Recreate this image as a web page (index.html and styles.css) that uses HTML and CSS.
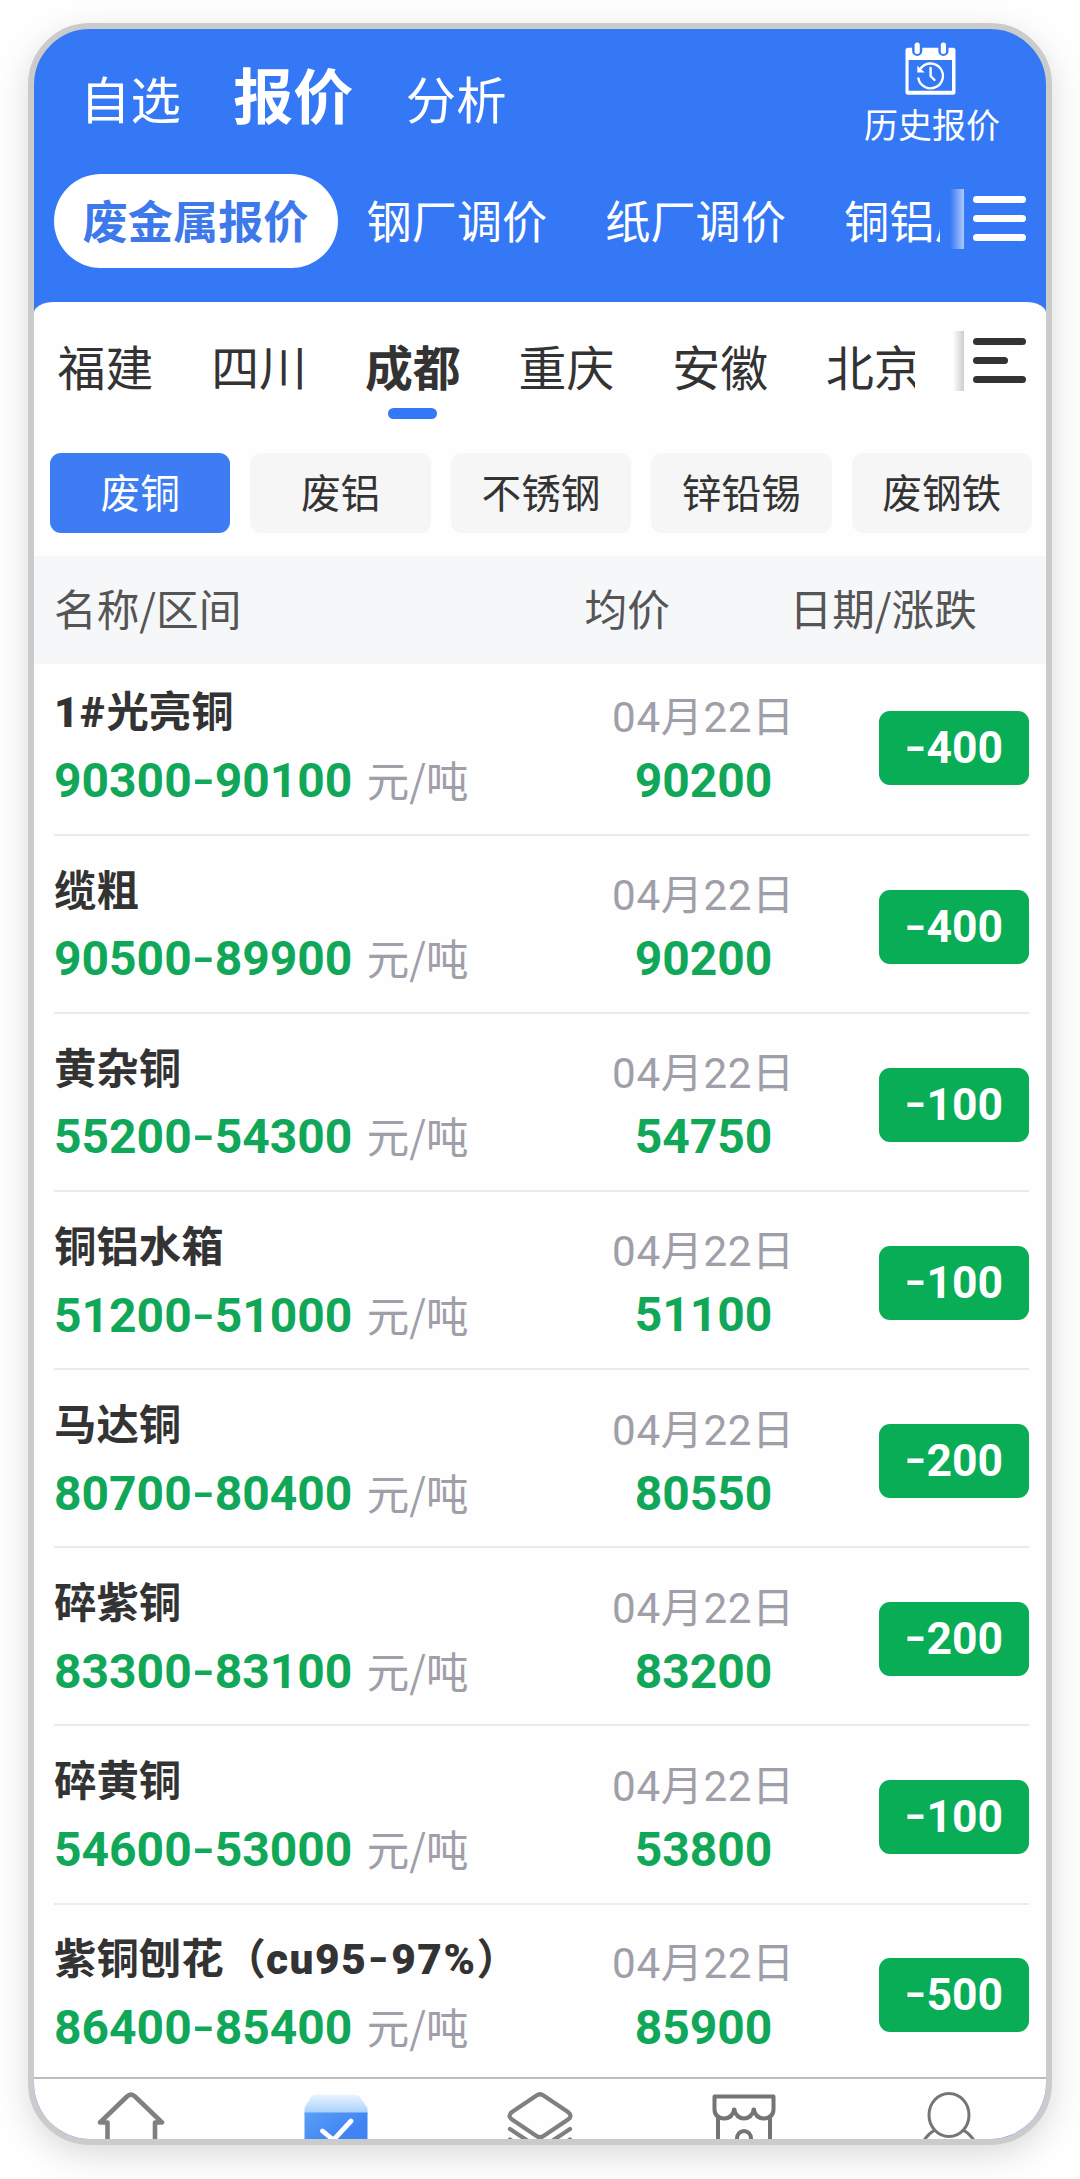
FILE: index.html
```html
<!DOCTYPE html>
<html lang="zh-CN">
<head>
<meta charset="utf-8">
<title>报价</title>
<link rel="stylesheet" href="styles.css">
</head>
<body>
<div class="phone">
  <header class="header">
    <div class="top">
      <nav class="nav"><span>自选</span><span class="nav-active">报价</span><span>分析</span></nav>
      <div class="history">
        <svg width="51" height="54" viewBox="0 0 51 54" fill="none">
          <path d="M3 5.7H48Q50.5 5.7 50.5 8.5V50Q50.5 52.8 48 52.8H3Q.5 52.8 .5 50V8.5Q.5 5.7 3 5.7Z" fill="#fff"/>
          <path d="M3.6 18H47V48.8H3.6Z" fill="#3478f5"/>
          <rect x="9.6" y="-2" width="5.2" height="13.5" rx="2.6" fill="#fff" stroke="#3478f5" stroke-width="5"/>
          <rect x="35.8" y="-2" width="5.2" height="13.5" rx="2.6" fill="#fff" stroke="#3478f5" stroke-width="5"/>
          <rect x="9.6" y=".5" width="5.2" height="11.5" rx="2.5" fill="#fff"/>
          <rect x="35.8" y=".5" width="5.2" height="11.5" rx="2.5" fill="#fff"/>
          <path d="M16 26A12.4 12.4 0 1 1 13.4 36.5M25.6 26V34L29.5 38" stroke="#fff" stroke-width="2.4" stroke-linecap="round"/>
          <path d="M12.3 23.8V30.6H19.8Z" fill="#fff"/>
        </svg>
        <span>历史报价</span>
      </div>
    </div>
    <div class="kinds">
      <div class="kind-list"><span class="kind kind-active">废金属报价</span><span class="kind">钢厂调价</span><span class="kind">纸厂调价</span><span class="kind">铜铝厂调价</span></div>
      <i class="fade"></i>
      <div class="menu"><i></i><i></i><i></i></div>
    </div>
  </header>
  <main class="sheet">
    <div class="regions">
      <div class="region-list"><span>福建</span><span>四川</span><span class="region-active">成都</span><span>重庆</span><span>安徽</span><span>北京</span></div>
      <i class="fade fade-dark"></i>
      <div class="menu menu-dark"><i></i><i class="short"></i><i></i></div>
    </div>
    <div class="chips"><span class="chip chip-active">废铜</span><span class="chip">废铝</span><span class="chip">不锈钢</span><span class="chip">锌铅锡</span><span class="chip">废钢铁</span></div>
    <div class="thead"><span>名称/区间</span><span>均价</span><span>日期/涨跌</span></div>
    <div class="rows">
      <div class="row"><div><div class="name"><b>1#</b>光亮铜</div><div class="price">90300<i>-</i>90100<small>元/吨</small></div></div><div class="mid"><div class="date">04月22日</div><div class="price">90200</div></div><div class="badge"><i>-</i>400</div></div>
      <div class="row"><div><div class="name">缆粗</div><div class="price">90500<i>-</i>89900<small>元/吨</small></div></div><div class="mid"><div class="date">04月22日</div><div class="price">90200</div></div><div class="badge"><i>-</i>400</div></div>
      <div class="row"><div><div class="name">黄杂铜</div><div class="price">55200<i>-</i>54300<small>元/吨</small></div></div><div class="mid"><div class="date">04月22日</div><div class="price">54750</div></div><div class="badge"><i>-</i>100</div></div>
      <div class="row"><div><div class="name">铜铝水箱</div><div class="price">51200<i>-</i>51000<small>元/吨</small></div></div><div class="mid"><div class="date">04月22日</div><div class="price">51100</div></div><div class="badge"><i>-</i>100</div></div>
      <div class="row"><div><div class="name">马达铜</div><div class="price">80700<i>-</i>80400<small>元/吨</small></div></div><div class="mid"><div class="date">04月22日</div><div class="price">80550</div></div><div class="badge"><i>-</i>200</div></div>
      <div class="row"><div><div class="name">碎紫铜</div><div class="price">83300<i>-</i>83100<small>元/吨</small></div></div><div class="mid"><div class="date">04月22日</div><div class="price">83200</div></div><div class="badge"><i>-</i>200</div></div>
      <div class="row"><div><div class="name">碎黄铜</div><div class="price">54600<i>-</i>53000<small>元/吨</small></div></div><div class="mid"><div class="date">04月22日</div><div class="price">53800</div></div><div class="badge"><i>-</i>100</div></div>
      <div class="row"><div><div class="name">紫铜刨花（<b>cu95<i>-</i>97%</b>）</div><div class="price">86400<i>-</i>85400<small>元/吨</small></div></div><div class="mid"><div class="date">04月22日</div><div class="price">85900</div></div><div class="badge"><i>-</i>500</div></div>
    </div>
  </main>
  <footer class="tabbar">
    <svg width="68" height="60" viewBox="0 0 68 60" fill="none" stroke="#808080" stroke-width="4.6" stroke-linejoin="round" stroke-linecap="round">
      <path d="M10.5 62V31.5H3L30 5.5Q34 1.8 38 5.5L65 31.5H58V62"/>
    </svg>
    <svg width="64" height="60" viewBox="0 0 64 60" fill="none">
      <defs>
        <linearGradient id="lid" x1="0" y1="0" x2="0" y2="1"><stop offset="0" stop-color="#eaf5fe"/><stop offset="1" stop-color="#a3cdfb"/></linearGradient>
        <linearGradient id="box" x1="0" y1="0" x2="1" y2="1"><stop offset="0" stop-color="#58a0f5"/><stop offset=".6" stop-color="#4084f3"/></linearGradient>
      </defs>
      <path d="M.5 23V17L7 6Q9 3.5 12 3.5H51Q54 3.5 56 6L63.5 17V23Z" fill="url(#lid)"/>
      <path d="M.5 21.5H63.5V60H.5Z" fill="url(#box)"/>
      <path d="M18.5 40L29.5 49L47 30" stroke="#fff" stroke-width="4.8" stroke-linecap="round" stroke-linejoin="round"/>
    </svg>
    <svg width="66" height="60" viewBox="0 0 66 60" fill="none" stroke="#808080" stroke-width="4.2" stroke-linejoin="round" stroke-linecap="round">
      <path d="M29.5 4.5Q33 2 36.5 4.5L61 21Q66 25 61 28.5L36.5 45Q33 47.5 29.5 45L5 28.5Q0 25 5 21ZM3 38L33 58L63 38M3 48.5L20 60M63 48.5L46 60"/>
    </svg>
    <svg width="64" height="60" viewBox="0 0 64 60" fill="none" stroke="#747474" stroke-width="4" stroke-linejoin="round">
      <path d="M2.5 5.5H61.5V18Q61.5 27 51.5 27.5Q43.5 27 41.8 18.5Q40 27 32 27.5Q24 27 22.2 18.5Q20.5 27 12.5 27.5Q2.5 27 2.5 18ZM6 26V62M58 26V62"/>
      <path d="M25 62V47.5A7 7.5 0 0 1 39 47.5V62"/>
      <path d="M22.2 17V23M41.8 17V23"/>
    </svg>
    <svg width="64" height="60" viewBox="0 0 64 60" fill="none" stroke="#757575" stroke-width="3">
      <ellipse cx="32" cy="24" rx="20" ry="21.5"/><path d="M18 39Q10 43 5 53M46 39Q54 43 59 53"/>
    </svg>
  </footer>
</div>
</body>
</html>
```
FILE: styles.css
```css
* { box-sizing: border-box; }
body {
  margin: 0;
  height: 2179px;
  padding: 23px 28px 0;
  background: #fefefe;
  overflow: hidden;
  color: #333;
  font-family: "Noto Sans CJK SC", sans-serif;
  white-space: nowrap;
}
i { font-style: normal; }
.phone {
  width: 1024px;
  height: 2122px;
  border: 6px solid #cbcbcb;
  border-radius: 62px;
  background: #3478f5;
  overflow: hidden;
  display: flex;
  flex-direction: column;
  box-shadow: 0 10px 32px rgba(0, 0, 0, .14);
}
.header { height: 273px; flex: none; color: #fff; }
.top { height: 145px; display: flex; justify-content: space-between; align-items: flex-start; padding: 13px 46px 0 46px; }
.nav { display: flex; align-items: baseline; gap: 52.5px; margin-top: 11px; font-size: 50.4px; line-height: 80px; }
.nav-active { font-size: 60px; font-weight: 700; }
.history { display: flex; flex-direction: column; align-items: center; font-size: 34px; line-height: 40px; gap: 8px; }
.history svg { margin-right: 3px; }
.kinds { height: 94px; display: flex; align-items: center; padding-left: 20px; }
.kind-list { width: 886px; height: 94px; display: flex; overflow: hidden; }
.kind { flex: none; padding: 0 29.4px 0 28.6px; font-size: 45.2px; line-height: 91px; }
.kind-active { background: #fff; color: #3d79ea; border-radius: 47px; font-weight: 700; }
.fade { width: 14px; height: 60px; margin-left: 10px; background: linear-gradient(90deg, rgba(255,255,255,0), rgba(255,255,255,.6)); }
.kinds .fade, .kinds .menu { margin-bottom: 5px; }
.fade-dark { width: 11px; margin-left: 38px; background: linear-gradient(90deg, rgba(200,200,200,0), #cdcdcd); }
.menu { width: 53px; display: flex; flex-direction: column; gap: 12px; margin-left: 9px; }
.menu i { height: 7px; border-radius: 4px; background: #fff; }
.menu-dark i { background: #333; }
.menu .short { width: 35px; }
.sheet { flex: 1; background: #fefefe; border-radius: 20px 20px 0 0 / 11px 11px 0 0; min-height: 0; display: flex; flex-direction: column; }
.regions { height: 117px; display: flex; padding: 29px 0 0 23.5px; flex: none; }
.region-list { width: 857.5px; height: 88px; display: flex; gap: 57.9px; overflow: hidden; font-size: 47.9px; line-height: 69px; }
.region-list span { flex: none; }
.region-active { font-weight: 700; display: flex; flex-direction: column; align-items: center; gap: 8px; }
.region-active::after { content: ""; width: 49px; height: 12px; border-radius: 6px; background: #3478f5; }
.menu-dark { margin-top: 7px; }
.chips { margin-top: 34px; padding: 0 14px 0 16px; display: grid; grid-template-columns: repeat(5, 1fr); gap: 20px; }
.chip { height: 80px; border-radius: 11px; background: #f6f6f6; text-align: center; font-size: 39.7px; line-height: 75px; }
.chip-active { background: #3d7cf3; color: #fff; }
.thead { margin-top: 23px; height: 108px; flex: none; background: #f5f7f9; color: #555; padding: 0 60px 0 20px; display: grid; grid-template-columns: 530.5px 205px 1fr; font-size: 42.7px; line-height: 102px; }
.rows { height: 1414px; padding: 0 17px 0 20px; display: flex; flex-direction: column; justify-content: flex-end; }
.row { height: 178.2px; flex: none; display: grid; grid-template-columns: 1fr 187px 150px; column-gap: 82px; padding-top: 22px; border-bottom: 2px solid #e9ebec; }
.row:first-child { height: 171.5px; padding-top: 15.3px; }
.row:last-child { height: 173px; padding-top: 21.3px; border-bottom: 0; }
.name { height: 60px; font-size: 42.4px; font-weight: 700; line-height: 60px; }
.name b { font-family: Roboto, sans-serif; letter-spacing: 1.6px; line-height: 1; }
.name b i { display: inline-block; padding: 0 1px 0 2px; transform: translateY(-1px) scale(1.2, .85); }
.price { font-family: Roboto, sans-serif; font-size: 48px; font-weight: 700; line-height: 60px; margin-top: 11.7px; color: #10a858; }
.price i { display: inline-block; padding: 0 2px; transform: translateY(-1px) scale(1.25, .85); }
.price small { font: 400 42.5px "Noto Sans CJK SC", sans-serif; line-height: 1; color: #a09fa9; margin-left: 14.5px; }
.mid { text-align: center; padding-top: 10.5px; }
.mid .price { margin-top: 4.7px; }
.date { font-family: Roboto, "Noto Sans CJK SC", sans-serif; font-size: 42.2px; line-height: 56.4px; letter-spacing: .6px; color: #a09fa9; }
.badge { margin-top: 32px; height: 74px; border-radius: 11px; background: #08ad55; color: #fff; text-align: center; font: 700 44.5px/74px Roboto, sans-serif; }
.badge i { display: inline-block; padding: 0 2px; transform: translateY(-1px) scale(1.3, .9); }
.tabbar { height: 62px; flex: none; margin: 0 -5px; border-top: 2px solid #bdbdbd; background: #fefefe; display: grid; grid-template-columns: repeat(5, 1fr); justify-items: center; overflow: hidden; padding-top: 12px; }
```
